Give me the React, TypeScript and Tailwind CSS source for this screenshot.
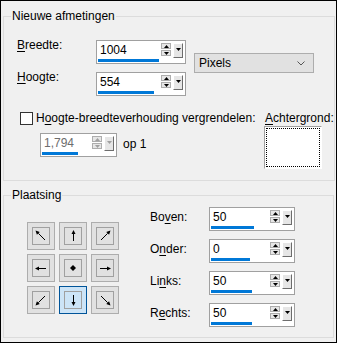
import React from "react";

type Dir = "nw" | "n" | "ne" | "w" | "c" | "e" | "sw" | "s" | "se";

const dirs: Record<Dir, [number, number] | null> = {
  nw: [-1, -1],
  n: [0, -1],
  ne: [1, -1],
  w: [-1, 0],
  c: null,
  e: [1, 0],
  sw: [-1, 1],
  s: [0, 1],
  se: [1, 1],
};

function Arrow({ dir }: { dir: Dir }) {
  const d = dirs[dir];
  const c = 8;
  if (!d) {
    return (
      <svg width="16" height="16" viewBox="0 0 16 16">
        <polygon points="8,5 11,8 8,11 5,8" fill="#000" />
      </svg>
    );
  }
  const [dx, dy] = d;
  const diag = dx !== 0 && dy !== 0;
  const a = diag ? 5.5 : 6;
  const b = diag ? 4 : 5;
  const tip = [c + dx * a, c + dy * a];
  const tail = [c - dx * b, c - dy * b];
  const len = Math.hypot(dx, dy);
  const ux = dx / len;
  const uy = dy / len;
  const L = 4;
  const W = 2;
  const bx = tip[0] - ux * L;
  const by = tip[1] - uy * L;
  const pts = `${tip[0]},${tip[1]} ${bx - uy * W},${by + ux * W} ${bx + uy * W},${by - ux * W}`;
  const off = diag ? 0 : 0.5;
  return (
    <svg width="16" height="16" viewBox="0 0 16 16">
      <line
        x1={tail[0] + (dx === 0 ? off : 0)}
        y1={tail[1] + (dy === 0 ? off : 0)}
        x2={bx + (dx === 0 ? off : 0)}
        y2={by + (dy === 0 ? off : 0)}
        stroke="#000"
        strokeWidth="1"
      />
      <polygon
        points={pts}
        fill="#000"
        transform={dx === 0 ? "translate(0.5 0)" : dy === 0 ? "translate(0 0.5)" : undefined}
      />
    </svg>
  );
}

function Tri({ up, color = "#000" }: { up?: boolean; color?: string }) {
  return (
    <svg width="5" height="3" viewBox="0 0 5 3">
      <polygon points={up ? "2.5,0 5,3 0,3" : "0,0 5,0 2.5,3"} fill={color} />
    </svg>
  );
}

function Spin({
  value,
  bar,
  w,
  disabled,
}: {
  value: string;
  bar: number;
  w: string;
  disabled?: boolean;
}) {
  const tri = disabled ? "#a0a0a0" : "#000";
  return (
    <div className={`flex h-[24px] shrink-0 border border-[#a0a0a0] bg-white ${w}`}>
      <div className="flex flex-1 flex-col pl-[1px]">
        <span className={`pl-[2px] pt-[1px] leading-[16px] ${disabled ? "text-[#6d6d6d]" : "text-black"}`}>
          {value}
        </span>
        <div className="mt-[1px] h-[3px] bg-[#0078d7]" style={{ width: bar }} />
      </div>
      <div className="mt-[2px] flex w-[10px] flex-col gap-[1px]">
        <div className="flex h-[6px] items-center justify-center border border-[#adadad] bg-[#e6e6e6]">
          <Tri up color={tri} />
        </div>
        <div className="flex h-[6px] items-center justify-center border border-[#adadad] bg-[#e6e6e6]">
          <Tri color={tri} />
        </div>
      </div>
      <div className="mx-[2px] mt-[2px] flex h-[15px] w-[10px] justify-center border border-b-[#6d6d6d] border-l-white border-r-[#6d6d6d] border-t-white bg-[#e6e6e6] pt-[4px]">
        <Tri color={tri} />
      </div>
    </div>
  );
}

const grid: Dir[] = ["nw", "n", "ne", "w", "c", "e", "sw", "s", "se"];

const plaatsing = [
  { pre: "Bo", key: "v", post: "en:", value: "50", bar: 43 },
  { pre: "O", key: "n", post: "der:", value: "0", bar: 39 },
  { pre: "Li", key: "n", post: "ks:", value: "50", bar: 41 },
  { pre: "R", key: "e", post: "chts:", value: "50", bar: 41 },
];

export default function App() {
  return (
    <div className="h-[343px] w-[337px] overflow-hidden border border-black bg-[#f0f0f0] font-['Liberation_Sans',Arial,sans-serif] text-[12px] leading-[16px] text-black">
      {/* Nieuwe afmetingen */}
      <fieldset className="ml-[2px] mt-[7px] w-[331px] border border-[#dcdcdc] pb-[11px]">
        <legend className="ml-[7px] px-[1px]">Nieuwe afmetingen</legend>
        <div className="flex pl-[13px] pt-[16px]">
          <div className="flex flex-col gap-[8px]">
            <div className="flex items-start">
              <label className="-mt-[3px] w-[79px]">
                <span className="underline underline-offset-2">B</span>reedte:
              </label>
              <Spin value="1004" bar={61} w="w-[90px]" />
            </div>
            <div className="flex items-start">
              <label className="-mt-[3px] w-[79px]">
                <span className="underline underline-offset-2">H</span>oogte:
              </label>
              <Spin value="554" bar={56} w="w-[90px]" />
            </div>
          </div>
          <div className="ml-[8px] mt-[13px] flex h-[20px] w-[120px] items-center justify-between border border-[#adadad] bg-[#e1e1e1] pl-[4px] pr-[8px]">
            <span>Pixels</span>
            <svg width="8" height="5" viewBox="0 0 8 5">
              <polyline points="0.5,0.5 4,4 7.5,0.5" fill="none" stroke="#555" strokeWidth="1" />
            </svg>
          </div>
        </div>

        <div className="mt-[14px] flex">
          <div className="w-[260px] shrink-0 pl-[16px]">
            <div className="flex items-center">
              <div className="h-[13px] w-[13px] shrink-0 border border-[#333] bg-white" />
              <span className="ml-[3px] whitespace-nowrap">
                H<span className="underline underline-offset-2">o</span>ogte-breedteverhouding vergrendelen:
              </span>
            </div>
            <div className="ml-[20px] mt-[7px] flex items-start">
              <Spin value="1,794" bar={36} w="w-[77px]" disabled />
              <span className="ml-[6px] mt-[3px]">op 1</span>
            </div>
          </div>
          <div className="flex flex-col">
            <span className="whitespace-nowrap pl-[1px]">
              <span className="underline underline-offset-2">A</span>chtergrond:
            </span>
            <div className="h-[43px] w-[58px] border border-b-white border-l-[#a0a0a0] border-r-white border-t-[#a0a0a0] bg-white p-[1px]">
              <div className="h-full w-full border border-dotted border-black" />
            </div>
          </div>
        </div>
      </fieldset>

      {/* Plaatsing */}
      <fieldset className="ml-[2px] mt-[6px] w-[331px] border border-[#dcdcdc] pb-[10px]">
        <legend className="ml-[7px] px-[1px]">Plaatsing</legend>
        <div className="flex">
          <div className="ml-[23px] mt-[19px] grid h-fit grid-cols-3 gap-[4px]">
            {grid.map((d) => (
              <div
                key={d}
                className={`flex h-[28px] w-[28px] items-center justify-center border ${
                  d === "s" ? "border-[#005499] bg-[#cce4f7]" : "border-[#adadad] bg-[#e1e1e1]"
                }`}
              >
                <div className="flex h-[18px] w-[18px] items-center justify-center border border-[#a0a0a0]">
                  <Arrow dir={d} />
                </div>
              </div>
            ))}
          </div>
          <div className="ml-[31px] mt-[4px] flex flex-col gap-[8px]">
            {plaatsing.map((p) => (
              <div key={p.pre} className="flex items-start">
                <label className="w-[59px] pt-[2px]">
                  {p.pre}
                  <span className="underline underline-offset-2">{p.key}</span>
                  {p.post}
                </label>
                <Spin value={p.value} bar={p.bar} w="w-[86px]" />
              </div>
            ))}
          </div>
        </div>
      </fieldset>
    </div>
  );
}
